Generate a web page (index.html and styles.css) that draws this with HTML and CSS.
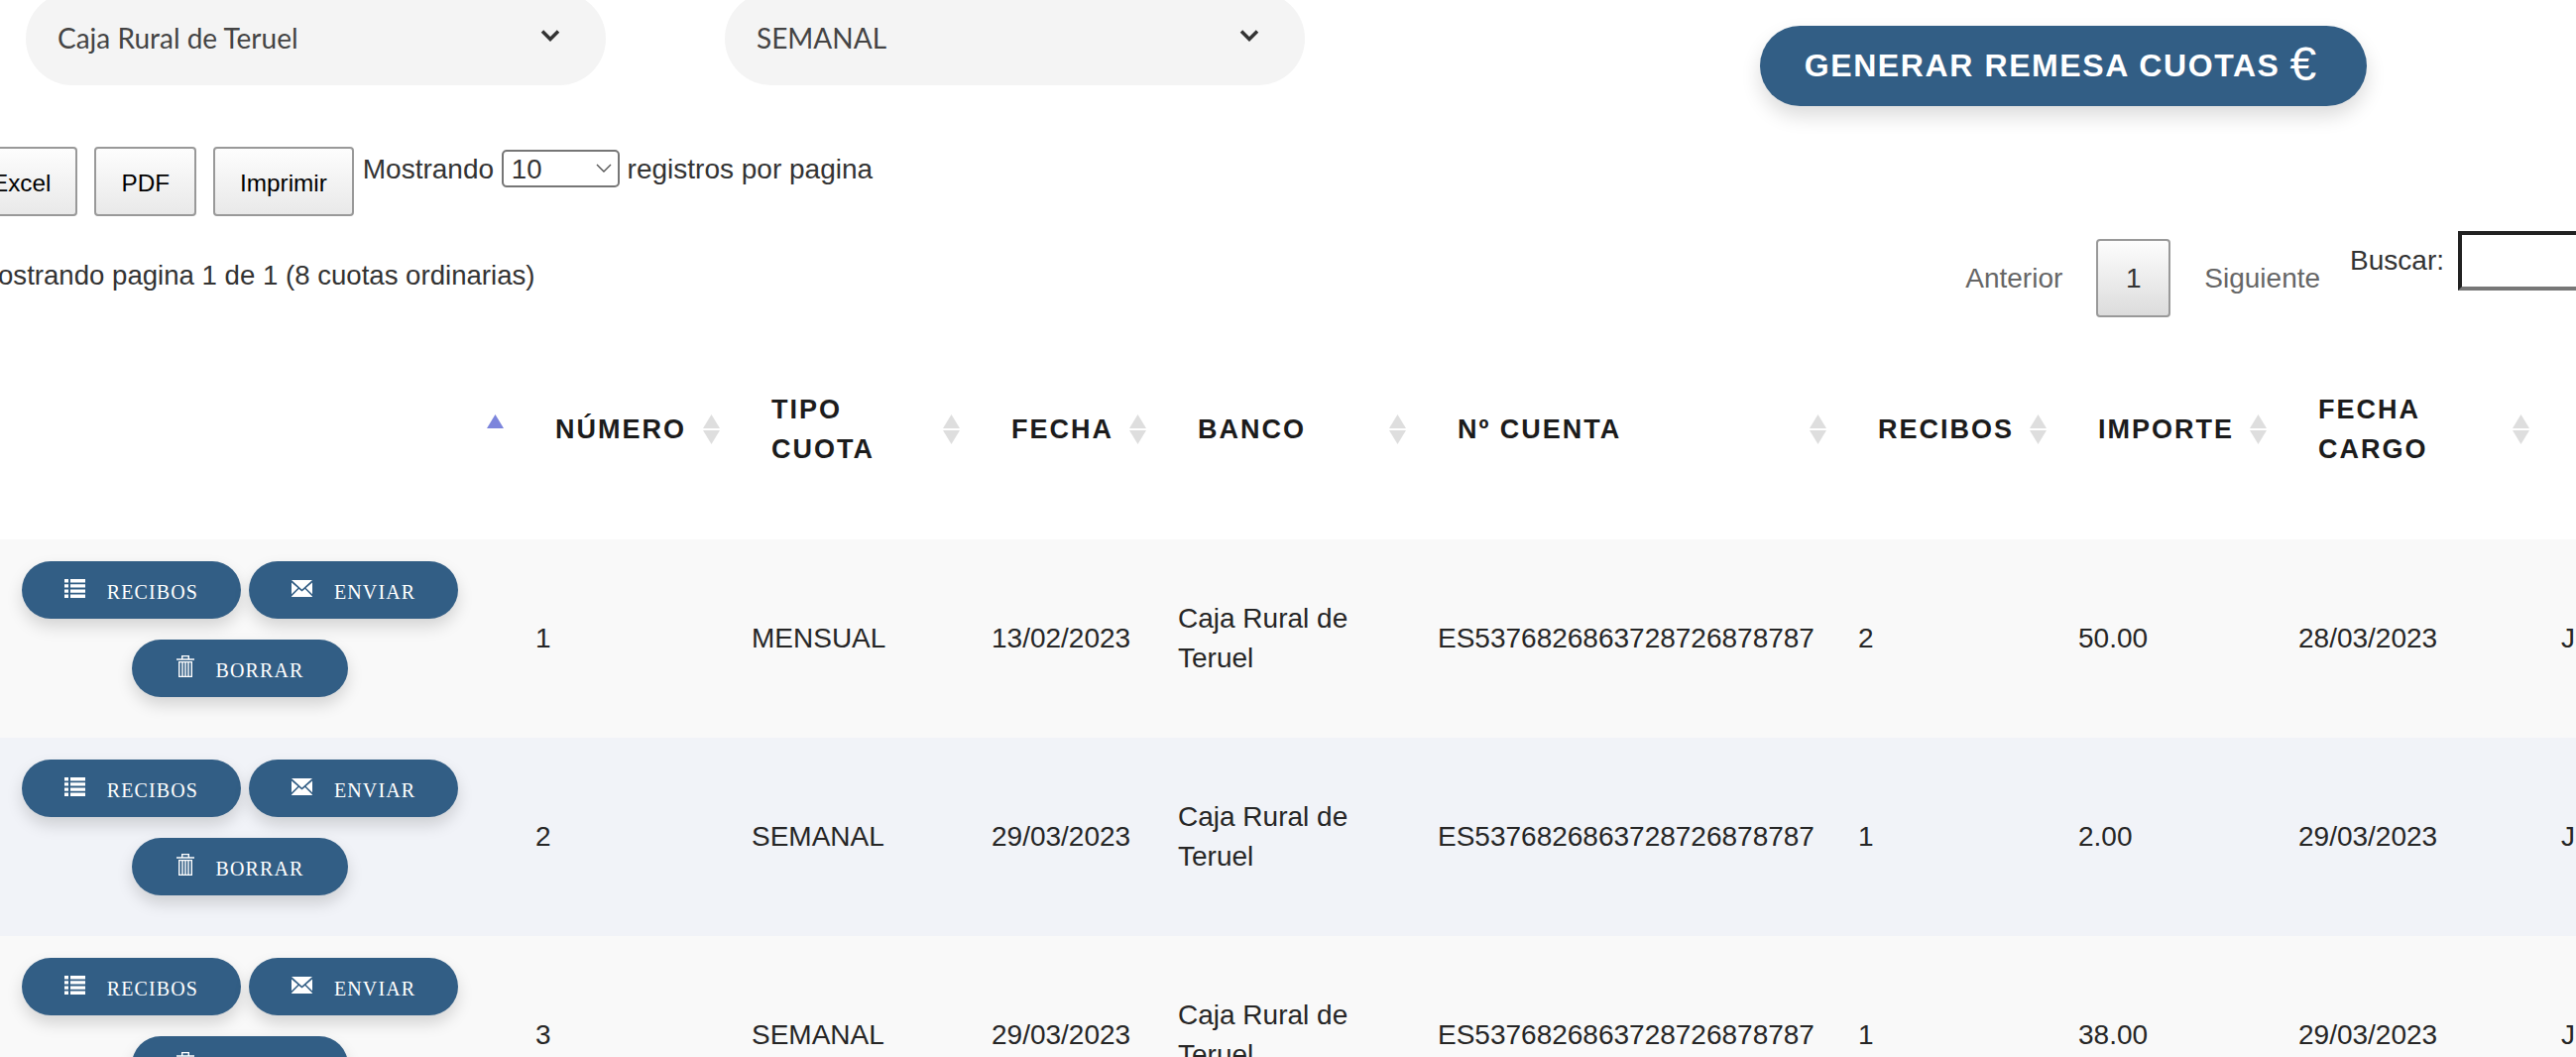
FILE: index.html
```html
<!DOCTYPE html>
<html lang="es">
<head>
    <meta charset="UTF-8">
    <meta name="viewport" content="width=device-width, initial-scale=1.0">
    <title>Cuotas ordinarias</title>
    <link rel="stylesheet" href="styles.css">
</head>
<body>
    <svg class="sprites" aria-hidden="true">
        <symbol id="i-list" viewBox="0 0 21 19">
            <path d="M0 0h4v3.4H0zM6 0h15v3.4H6zM0 5.2h4v3.4H0zM6 5.2h15v3.4H6zM0 10.4h4v3.4H0zM6 10.4h15v3.4H6zM0 15.6h4V19H0zM6 15.6h15V19H6z"/>
        </symbol>
        <symbol id="i-mail" viewBox="0 0 21 17">
            <path d="M0 0h21L10.5 9.5zM0 2.5L6.4 8 0 14.2zM21 2.5L14.6 8 21 14.2zM0 17v-.6L7.4 9l3.1 2.6L13.6 9l7.4 7.4v.6z"/>
        </symbol>
        <symbol id="i-trash" viewBox="0 0 18 22">
            <path d="M0 3.2h5V0h8v3.2h5v1.5H0zM6.4 1.3v1.9h5.2V1.3z" fill-rule="evenodd"/>
            <path d="M2 6h14v16H2zM3.4 7.3v13.4h1.9V7.3zM6.7 7.3v13.4h1.6V7.3zM9.7 7.3v13.4h1.6V7.3zM12.7 7.3v13.4h1.9V7.3z" fill-rule="evenodd"/>
        </symbol>
        <symbol id="i-sort" viewBox="0 0 17 30">
            <path d="M8.5 0L17 14H0z"/>
            <path d="M0 16h17L8.5 30z"/>
        </symbol>
        <symbol id="i-sort-asc" viewBox="0 0 17 30">
            <path d="M8.5 0L17 14H0z"/>
        </symbol>
    </svg>

    <div class="page">
        <div class="top-bar">
            <div class="pill-select">
                <span>Caja Rural de Teruel</span>
                <svg class="chevron" viewBox="0 0 20 12"><path d="M2 1.5l8 8 8-8"/></svg>
            </div>
            <div class="pill-select">
                <span>SEMANAL</span>
                <svg class="chevron" viewBox="0 0 20 12"><path d="M2 1.5l8 8 8-8"/></svg>
            </div>
            <button class="btn-remesa">GENERAR REMESA CUOTAS <span class="euro">€</span></button>
        </div>

        <div class="toolbar">
            <button class="dt-button">Excel</button>
            <button class="dt-button">PDF</button>
            <button class="dt-button">Imprimir</button>
            <label class="length">
                Mostrando
                <span class="length-select">
                    <select>
                        <option>10</option>
                        <option>25</option>
                        <option>50</option>
                    </select>
                    <svg viewBox="0 0 16 9"><path d="M1 1l7 7 7-7"/></svg>
                </span>
                registros por pagina
            </label>
        </div>

        <div class="info-row">
            <div class="info">Mostrando pagina 1 de 1 (8 cuotas ordinarias)</div>
            <div class="paginate">
                <span class="page-link">Anterior</span>
                <button class="page-current">1</button>
                <span class="page-link">Siguiente</span>
            </div>
            <label class="search">Buscar: <input type="search"></label>
        </div>

        <table class="cuotas">
            <colgroup>
                <col class="c-actions"><col class="c-num"><col class="c-tipo"><col class="c-fecha"><col class="c-banco">
                <col class="c-cuenta"><col class="c-recibos"><col class="c-importe"><col class="c-cargo"><col class="c-last">
            </colgroup>
            <thead>
                <tr>
                    <th class="sorted"><div class="th-in"><span></span><svg class="sort"><use href="#i-sort-asc"/></svg></div></th>
                    <th><div class="th-in"><span>NÚMERO</span><svg class="sort"><use href="#i-sort"/></svg></div></th>
                    <th><div class="th-in"><span>TIPO<br>CUOTA</span><svg class="sort"><use href="#i-sort"/></svg></div></th>
                    <th><div class="th-in"><span>FECHA</span><svg class="sort"><use href="#i-sort"/></svg></div></th>
                    <th><div class="th-in"><span>BANCO</span><svg class="sort"><use href="#i-sort"/></svg></div></th>
                    <th><div class="th-in"><span>Nº CUENTA</span><svg class="sort"><use href="#i-sort"/></svg></div></th>
                    <th><div class="th-in"><span>RECIBOS</span><svg class="sort"><use href="#i-sort"/></svg></div></th>
                    <th><div class="th-in"><span>IMPORTE</span><svg class="sort"><use href="#i-sort"/></svg></div></th>
                    <th><div class="th-in"><span>FECHA<br>CARGO</span><svg class="sort"><use href="#i-sort"/></svg></div></th>
                    <th></th>
                </tr>
            </thead>
            <tbody>
                <tr>
                    <td class="actions">
                        <div class="action-wrap">
                            <button class="btn-row"><svg class="ic ic-list"><use href="#i-list"/></svg>RECIBOS</button>
                            <button class="btn-row"><svg class="ic ic-mail"><use href="#i-mail"/></svg>ENVIAR</button>
                            <button class="btn-row btn-borrar"><svg class="ic ic-trash"><use href="#i-trash"/></svg>BORRAR</button>
                        </div>
                    </td>
                    <td>1</td><td>MENSUAL</td><td>13/02/2023</td><td>Caja Rural de Teruel</td>
                    <td>ES5376826863728726878787</td><td>2</td><td>50.00</td><td>28/03/2023</td><td>Juan</td>
                </tr>
                <tr>
                    <td class="actions">
                        <div class="action-wrap">
                            <button class="btn-row"><svg class="ic ic-list"><use href="#i-list"/></svg>RECIBOS</button>
                            <button class="btn-row"><svg class="ic ic-mail"><use href="#i-mail"/></svg>ENVIAR</button>
                            <button class="btn-row btn-borrar"><svg class="ic ic-trash"><use href="#i-trash"/></svg>BORRAR</button>
                        </div>
                    </td>
                    <td>2</td><td>SEMANAL</td><td>29/03/2023</td><td>Caja Rural de Teruel</td>
                    <td>ES5376826863728726878787</td><td>1</td><td>2.00</td><td>29/03/2023</td><td>Juan</td>
                </tr>
                <tr>
                    <td class="actions">
                        <div class="action-wrap">
                            <button class="btn-row"><svg class="ic ic-list"><use href="#i-list"/></svg>RECIBOS</button>
                            <button class="btn-row"><svg class="ic ic-mail"><use href="#i-mail"/></svg>ENVIAR</button>
                            <button class="btn-row btn-borrar"><svg class="ic ic-trash"><use href="#i-trash"/></svg>BORRAR</button>
                        </div>
                    </td>
                    <td>3</td><td>SEMANAL</td><td>29/03/2023</td><td>Caja Rural de Teruel</td>
                    <td>ES5376826863728726878787</td><td>1</td><td>38.00</td><td>29/03/2023</td><td>Juan</td>
                </tr>
            </tbody>
        </table>
    </div>
</body>
</html>
```

FILE: styles.css
```css
:root {
    --blue: #325e85;
    --text: #333;
}

* {
    box-sizing: border-box;
}

html,
body {
    margin: 0;
    height: 100%;
    overflow: hidden;
    background: white;
}

body {
    font-family: "Liberation Sans", Arial, sans-serif;
    font-size: 28px;
    color: var(--text);
}

.sprites {
    display: none;
}

.page {
    width: 2598px;
    margin-top: -8px;
}

/* top selects + remesa button */
.top-bar {
    display: flex;
    align-items: flex-start;
    padding-left: 26px;
}

.pill-select {
    display: flex;
    align-items: center;
    justify-content: space-between;
    width: 585px;
    height: 94px;
    margin-right: 120px;
    padding: 0 46px 2px 32px;
    background: #f4f4f4;
    border-radius: 50px;
    font-family: Lato, sans-serif;
    font-size: 28px;
    color: #444;
}

.chevron {
    width: 20px;
    height: 12px;
    margin-top: -4px;
    fill: none;
    stroke: #333;
    stroke-width: 3.5;
}

.btn-remesa {
    display: flex;
    align-items: center;
    justify-content: center;
    gap: 10px;
    width: 612px;
    height: 81px;
    margin: 34px 0 0 339px;
    padding: 0 6px 0 0;
    border: none;
    border-radius: 41px;
    background: var(--blue);
    color: white;
    font-family: inherit;
    font-size: 32px;
    font-weight: bold;
    letter-spacing: 1.6px;
    box-shadow: 0 10px 20px rgba(0, 0, 0, 0.14);
}

.euro {
    font-size: 48px;
    font-weight: normal;
    letter-spacing: 0;
    line-height: 1;
    margin-top: -4px;
}

/* datatable controls */
.toolbar {
    display: flex;
    align-items: flex-start;
    gap: 17px;
    margin: 41px 0 0 -35px;
}

.dt-button {
    height: 70px;
    padding: 3px 25px 0;
    border: 2px solid #999;
    border-radius: 4px;
    background: linear-gradient(#fdfdfd, #e9e9e9);
    color: black;
    font-family: inherit;
    font-size: 24.3px;
}

.length {
    margin: 3px 0 0 -8px;
    line-height: 40px;
    white-space: nowrap;
}

.length-select {
    position: relative;
    display: inline-block;
    vertical-align: top;
    height: 38px;
}

.length-select select {
    display: block;
    width: 119px;
    height: 38px;
    padding: 0 0 0 8px;
    appearance: none;
    font-family: inherit;
    font-size: 27.6px;
    color: var(--text);
    background: white;
    border: 2px solid #767676;
    border-radius: 5px;
}

.length-select svg {
    position: absolute;
    top: 14px;
    right: 8px;
    width: 16px;
    height: 9px;
    fill: none;
    stroke: #555;
    stroke-width: 1.4;
}

.info-row {
    display: flex;
    align-items: flex-start;
    height: 87px;
    margin-top: 15px;
}

.info {
    margin: 25px 0 0 -25px;
    font-size: 27.6px;
    line-height: 40px;
    white-space: nowrap;
}

.paginate {
    display: flex;
    align-items: center;
    gap: 34px;
    margin-left: auto;
    margin-top: 8px;
    color: #666;
}

.page-current {
    width: 75px;
    height: 79px;
    padding: 0;
    border: 2px solid #999;
    border-radius: 4px;
    background: linear-gradient(#fdfdfd, #dcdcdc);
    color: var(--text);
    font-family: inherit;
    font-size: 28px;
}

.search {
    display: flex;
    align-items: flex-start;
    gap: 14px;
    margin: 0 -31px 0 30px;
    line-height: 60px;
    flex: none;
}

.search input {
    width: 150px;
    height: 60px;
    background: white;
    border-style: solid;
    border-width: 4px;
    border-color: #222 #777 #777 #222;
}

/* table */
.cuotas {
    table-layout: fixed;
    width: 2763px;
    margin-top: 2px;
    border-collapse: collapse;
}

.c-actions { width: 520px; }
.c-num { width: 218px; }
.c-tipo { width: 242px; }
.c-fecha { width: 188px; }
.c-banco { width: 262px; }
.c-cuenta { width: 424px; }
.c-recibos { width: 222px; }
.c-importe { width: 222px; }
.c-cargo { width: 265px; }
.c-last { width: 200px; }

.cuotas th {
    height: 222px;
    padding: 0 12px 0 40px;
    text-align: left;
    font-size: 27px;
    line-height: 40px;
    letter-spacing: 2px;
    color: #1c1c1c;
}

.th-in {
    display: flex;
    align-items: center;
    justify-content: space-between;
}

.sort {
    flex: none;
    width: 17px;
    height: 30px;
    fill: #dedede;
}

.sorted .sort {
    fill: #7c85dc;
}

.cuotas td {
    height: 200px;
    padding: 0 20px;
    line-height: 40px;
    vertical-align: middle;
    color: #262626;
}

tbody tr:nth-child(odd) {
    background: #f9f9f9;
}

tbody tr:nth-child(even) {
    background: #f1f3f8;
}

.cuotas td.actions {
    padding: 22px 36px 41px 0;
    vertical-align: top;
}

.action-wrap {
    display: flex;
    flex-wrap: wrap;
    justify-content: center;
    gap: 21px 8px;
}

.btn-row {
    display: flex;
    align-items: center;
    gap: 22px;
    height: 58px;
    padding: 4px 43px 0;
    border: none;
    border-radius: 29px;
    background: var(--blue);
    color: white;
    font-family: "Liberation Serif", serif;
    font-size: 20px;
    letter-spacing: 1.1px;
    box-shadow: 0 8px 16px rgba(0, 0, 0, 0.15);
}

.btn-borrar {
    padding: 4px 45px 0;
}

.ic {
    flex: none;
    margin-top: -8px;
    fill: white;
}

.ic-list { width: 21px; height: 19px; }
.ic-mail { width: 21px; height: 17px; }
.ic-trash { width: 18px; height: 22px; }
```
